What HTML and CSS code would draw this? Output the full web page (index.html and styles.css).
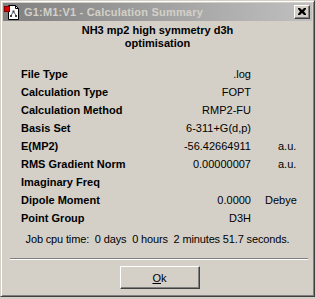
FILE: index.html
```html
<!DOCTYPE html>
<html>
<head>
<meta charset="utf-8">
<link rel="stylesheet" href="styles.css">
</head>
<body>
<div class="window">
  <div class="titlebar">
    <svg class="app-icon" width="16" height="16" viewBox="0 0 16 16">
      <path d="M4.5 1.5 H11.5 L14.5 4.5 V15.5 H4.5 Z" fill="#fff" stroke="#000"/>
      <path d="M11.5 1.5 V4.5 H14.5" fill="none" stroke="#000"/>
      <line x1="9.5" y1="7.5" x2="7" y2="11.5" stroke="#606060"/>
      <line x1="9.5" y1="7.5" x2="12" y2="11.5" stroke="#606060"/>
      <rect x="8.5" y="6.5" width="2" height="2" fill="#404040"/>
      <rect x="6" y="11" width="2" height="2" fill="#404040"/>
      <rect x="11" y="11" width="2" height="2" fill="#404040"/>
      <rect x="0.5" y="2.5" width="5" height="5" fill="#e00000" stroke="#800000"/>
    </svg>
    <span class="title">G1:M1:V1 - Calculation Summary</span>
    <span class="close">
      <svg width="8" height="7" viewBox="0 0 8 7"><path d="M0 0h2l2 2 2-2h2v1L6 3.5 8 6v1H6L4 5 2 7H0V6l2-2.5L0 1z" fill="#000"/></svg>
    </span>
  </div>
  <div class="content">
    <div class="heading">NH3 mp2 high symmetry d3h<br>optimisation</div>
    <div class="table">
      <div class="label">File Type</div><div class="value">.log</div><div class="unit"></div>
      <div class="label">Calculation Type</div><div class="value">FOPT</div><div class="unit"></div>
      <div class="label">Calculation Method</div><div class="value">RMP2-FU</div><div class="unit"></div>
      <div class="label">Basis Set</div><div class="value">6-311+G(d,p)</div><div class="unit"></div>
      <div class="label">E(MP2)</div><div class="value">-56.42664911</div><div class="unit au">a.u.</div>
      <div class="label">RMS Gradient Norm</div><div class="value">0.00000007</div><div class="unit au">a.u.</div>
      <div class="label">Imaginary Freq</div><div class="value"></div><div class="unit"></div>
      <div class="label">Dipole Moment</div><div class="value">0.0000</div><div class="unit debye">Debye</div>
      <div class="label">Point Group</div><div class="value">D3H</div><div class="unit"></div>
    </div>
    <div class="cpu">Job cpu time:  0 days  0 hours  2 minutes 51.7 seconds.</div>
    <div class="sep"></div>
    <div class="actions"><span class="btn"><u>O</u>k</span></div>
  </div>
</div>
</body>
</html>
```
FILE: styles.css
```css
html, body {
  margin: 0;
  padding: 0;
  background: #d4d0c8;
}
body {
  font-family: "Liberation Sans", Arial, sans-serif;
  font-size: 11px;
  color: #000;
}
.window {
  width: 315px;
  height: 297px;
  box-sizing: border-box;
  background: #d4d0c8;
  border-top: 1px solid #d4d0c8;
  border-left: 1px solid #d4d0c8;
  border-right: 1px solid #404040;
  border-bottom: 1px solid #404040;
  box-shadow: inset 1px 1px #ffffff, inset -1px -1px #808080;
  padding: 2px;
  display: flex;
  flex-direction: column;
}
.titlebar {
  height: 18px;
  display: flex;
  align-items: center;
  background: linear-gradient(to right, #808080, #c0c0c0);
  padding-left: 1px;
  padding-right: 2px;
}
.app-icon {
  flex: none;
  display: block;
}
.title {
  margin-left: 4px;
  color: #d4d0c8;
  font-family: "Liberation Sans", Arial, sans-serif;
  font-weight: bold;
  font-size: 11px;
  letter-spacing: 0.2px;
  white-space: nowrap;
  flex: 1;
}
.close {
  width: 16px;
  height: 14px;
  box-sizing: border-box;
  background: #d4d0c8;
  border-top: 1px solid #fff;
  border-left: 1px solid #fff;
  border-right: 1px solid #404040;
  border-bottom: 1px solid #404040;
  box-shadow: inset -1px -1px #808080;
  display: flex;
  align-items: center;
  justify-content: center;
  padding: 0 1px 1px 0;
}
.close svg { display: block; }
.content {
  flex: 1;
  display: flex;
  flex-direction: column;
}
.heading {
  margin-top: 3px;
  text-align: center;
  font-weight: bold;
  line-height: 13px;
}
.table {
  margin-top: 15px;
  display: grid;
  grid-template-columns: 150px 80px auto;
  grid-auto-rows: 18px;
  line-height: 18px;
  padding-left: 18px;
}
.label {
  font-weight: bold;
  white-space: nowrap;
}
.value {
  text-align: right;
  white-space: nowrap;
}
.unit { white-space: nowrap; }
.au { padding-left: 27px; }
.debye { padding-left: 14px; }
.cpu {
  margin-top: 3px;
  line-height: 18px;
  text-align: center;
  white-space: pre;
  letter-spacing: -0.15px;
}
.sep {
  margin: 10px 4px 0 7px;
  border-top: 1px solid #808080;
  border-bottom: 1px solid #ffffff;
  height: 0;
}
.actions {
  margin-top: 6px;
  display: flex;
  justify-content: center;
  padding-left: 4px;
}
.btn {
  width: 80px;
  height: 23px;
  box-sizing: border-box;
  border-top: 1px solid #fff;
  border-left: 1px solid #fff;
  border-right: 1px solid #404040;
  border-bottom: 1px solid #404040;
  box-shadow: inset -1px -1px #808080;
  display: flex;
  align-items: center;
  justify-content: center;
}
.btn u { text-decoration-thickness: 1px; text-underline-offset: 1px; }
```
